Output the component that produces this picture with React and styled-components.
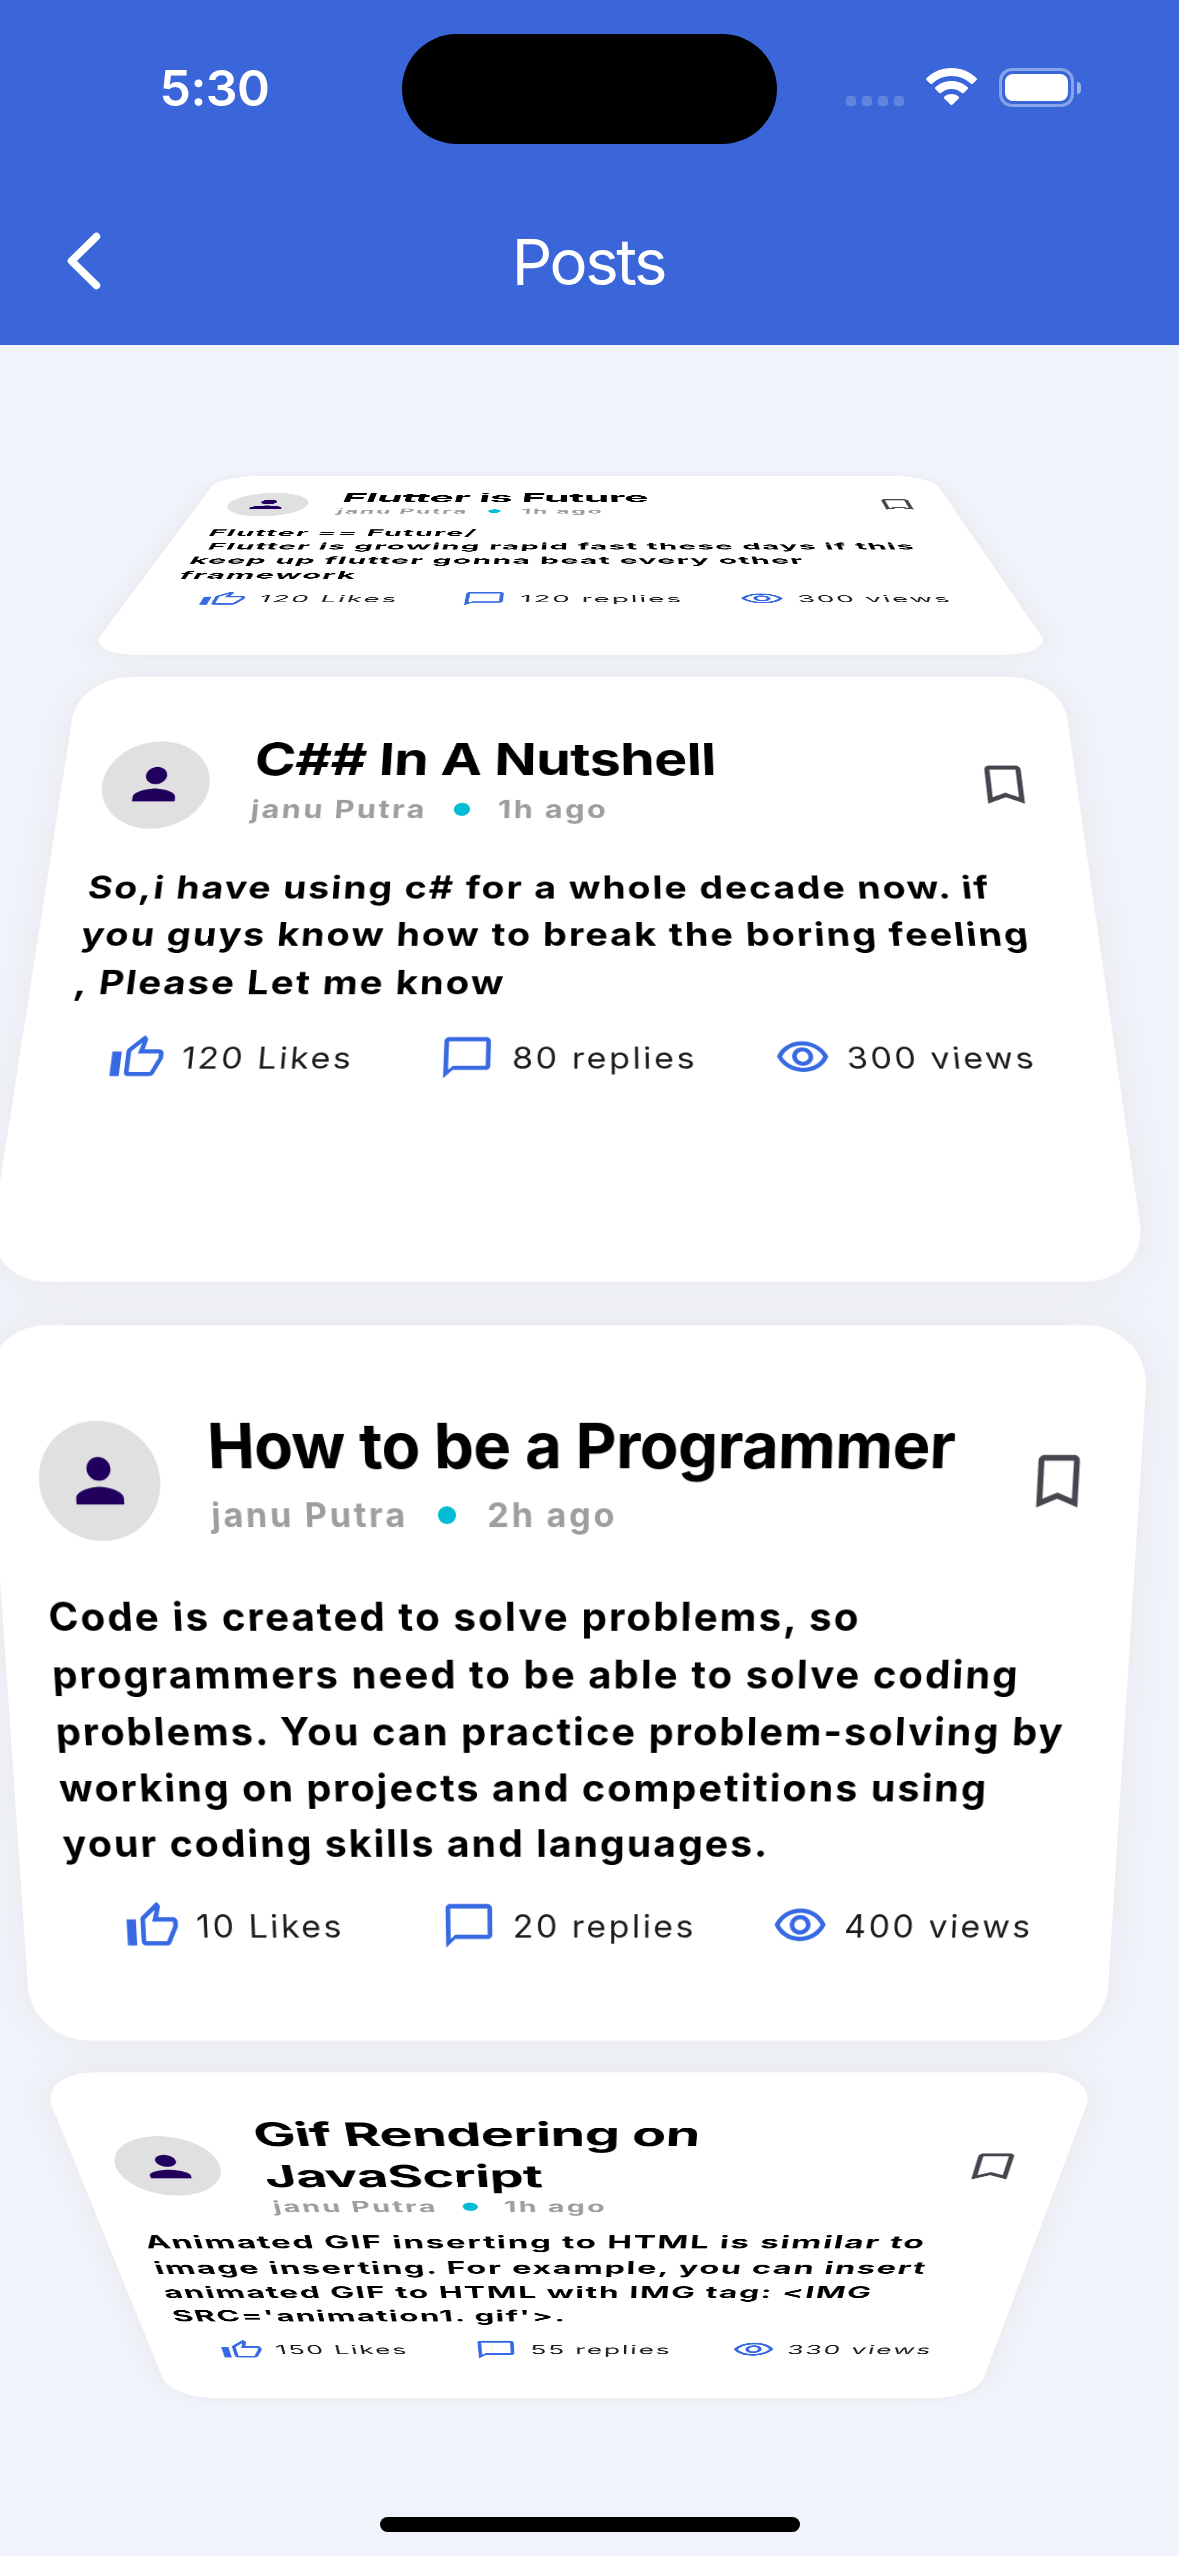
import React from "react";
import styled, { createGlobalStyle } from "styled-components";

const GlobalStyle = createGlobalStyle`
  * { box-sizing: border-box; }
  body { margin: 0; background: #f1f5fb; }
`;

const FONT = `Inter, "Liberation Sans", sans-serif`;

const Screen = styled.div`
  width: 1179px;
  height: 2556px;
  display: flex;
  flex-direction: column;
  overflow: hidden;
  background: #f1f5fb;
  font-family: ${FONT};
`;

const TopArea = styled.header`
  flex: none;
  height: 345px;
  display: flex;
  flex-direction: column;
  background: #3b66d9;
  color: #fff;
`;

const StatusBar = styled.div`
  height: 177px;
  display: grid;
  grid-template-columns: 402px 375px 402px;
  align-items: center;
`;

const Clock = styled.div`
  padding: 0 0 2px 27px;
  text-align: center;
  font-size: 50px;
  font-weight: 600;
  line-height: 60px;
  letter-spacing: -0.6px;
`;

const Island = styled.div`
  height: 110px;
  border-radius: 55px;
  background: #000;
`;

const Indicators = styled.div`
  display: flex;
  align-items: flex-end;
  justify-content: flex-end;
  padding-right: 98px;
  height: 41px;
  padding-bottom: 2px;
`;

const SignalDots = styled.div`
  display: flex;
  gap: 6px;
  margin: 0 22px 1px 0;
`;

const SignalDot = styled.i`
  width: 10px;
  height: 10px;
  border-radius: 3px;
  background: rgba(255, 255, 255, 0.2);
`;

const WifiGlyph = styled.svg`
  display: block;
  width: 51px;
  height: 38px;
  margin: 0 22px 1px 0;
`;

const Battery = styled.div`
  display: flex;
  align-items: center;
  gap: 3px;
`;

const BatteryShell = styled.div`
  width: 75px;
  height: 39px;
  padding: 3px;
  border: 3px solid rgba(255, 255, 255, 0.4);
  border-radius: 13px;
`;

const BatteryLevel = styled.div`
  height: 100%;
  border-radius: 8px;
  background: #fff;
`;

const BatteryCap = styled.div`
  width: 4px;
  height: 12px;
  border-radius: 0 6px 6px 0;
  background: rgba(255, 255, 255, 0.5);
`;

const NavBar = styled.nav`
  height: 168px;
  display: grid;
  grid-template-columns: 200px 1fr 200px;
  align-items: center;
`;

const BackButton = styled.button`
  display: flex;
  padding: 0 0 0 64px;
  border: 0;
  background: none;
`;

const PageTitle = styled.h1`
  margin: 2px 0 0;
  padding-right: 2px;
  text-align: center;
  font-size: 63.5px;
  font-weight: 400;
  line-height: 76px;
  letter-spacing: -2.4px;
`;

const Wheel = styled.main`
  flex: 1;
  display: grid;
  grid-template: 2211px / 1179px;
  align-items: center;
  perspective: 1000px;
  perspective-origin: 50% 50%;
`;

const Slot = styled.div`
  grid-area: 1 / 1;
  height: 750px;
  padding-right: 45px;
  transform: translateZ(-2211px) rotateX(${(p) => p.$angle}rad) translateZ(2211px);
`;

const Card = styled.article`
  height: 100%;
  padding: 72px 44px 0 45px;
  border-radius: 61px;
  background: #fff;
  box-shadow: 0 0 45px 5px rgba(165, 130, 130, 0.1);
`;

const CardHead = styled.div`
  display: flex;
  align-items: center;
  height: ${(p) => (p.$tall ? 210 : 161)}px;
  padding-right: 2px;
`;

const Avatar = styled.div`
  flex: none;
  display: flex;
  align-items: center;
  justify-content: center;
  width: 120px;
  height: 120px;
  padding-right: 1px;
  border-radius: 50%;
  background: #e0e0e0;
`;

const Heading = styled.div`
  flex: 1;
  align-self: flex-start;
  padding: ${(p) => (p.$tall ? 0 : 4)}px 0 0 48px;
`;

const Title = styled.h2`
  margin: 0;
  color: #000;
  font-size: 62.5px;
  font-weight: 700;
  line-height: 83px;
  letter-spacing: -0.6px;
  white-space: pre;
`;

const Byline = styled.div`
  display: flex;
  align-items: center;
  margin-top: ${(p) => (p.$tall ? -1 : 4)}px;
  padding-left: 1px;
  color: #9e9e9e;
  font-size: 34px;
  font-weight: 700;
  line-height: 48px;
  letter-spacing: 2.7px;
`;

const BylineDot = styled.i`
  width: 18px;
  height: 18px;
  margin: 0 31px 0 30px;
  border-radius: 50%;
  background: #00bcd4;
`;

const Body = styled.p`
  margin: 28px 0 31px;
  padding-left: 1px;
  color: #000;
  font-size: 40.5px;
  font-weight: 700;
  line-height: 60px;
  letter-spacing: 2.08px;
  white-space: pre;
`;

const Stats = styled.div`
  display: grid;
  grid-template-columns: repeat(3, 1fr);
`;

const Stat = styled.div`
  display: flex;
  align-items: center;
  justify-content: center;
  gap: 17px;
  height: 58px;
  color: #1d1b20;
  font-size: 35.2px;
  letter-spacing: 2.65px;
  white-space: nowrap;
`;

const Glyph = styled.svg`
  flex: none;
  display: block;
  width: ${(p) => p.$size}px;
  height: ${(p) => p.$size}px;
  fill: ${(p) => p.$color};
`;

const HomeArea = styled.footer`
  flex: none;
  display: flex;
  justify-content: center;
  height: 39px;
  margin-top: -39px;
`;

const HomeBar = styled.div`
  width: 420px;
  height: 15px;
  border-radius: 8px;
  background: #000;
`;

const PATHS = {
  person:
    "M12 12c2.21 0 4-1.79 4-4s-1.79-4-4-4-4 1.79-4 4 1.79 4 4 4zm0 2c-2.67 0-8 1.34-8 4v2h16v-2c0-2.66-5.33-4-8-4z",
  bookmark:
    "M17 3H7c-1.1 0-1.99.9-1.99 2L5 21l7-3 7 3V5c0-1.1-.9-2-2-2zm0 15l-5-2.18L7 18V5h10v13z",
  like:
    "M9 21h9c.83 0 1.54-.5 1.84-1.22l3.02-7.05c.09-.23.14-.47.14-.73v-2c0-1.1-.9-2-2-2h-6.31l.95-4.57.03-.32c0-.41-.17-.79-.44-1.06L14.17 1 7.58 7.59C7.22 7.95 7 8.45 7 9v10c0 1.1.9 2 2 2zM9 9l4.34-4.34L12 10h9v2l-3 7H9V9zM1 9h4v12H1z",
  reply:
    "M20 2H4c-1.1 0-2 .9-2 2v18l4-4h14c1.1 0 2-.9 2-2V4c0-1.1-.9-2-2-2zm0 14H6l-2 2V4h16v12z",
  view:
    "M12 6c3.79 0 7.17 2.13 8.82 5.5C19.17 14.87 15.79 17 12 17s-7.17-2.13-8.82-5.5C4.83 8.13 8.21 6 12 6m0-2C7 4 2.73 7.11 1 11.5 2.73 15.89 7 19 12 19s9.27-3.11 11-7.5C21.27 7.11 17 4 12 4zm0 5c1.38 0 2.5 1.12 2.5 2.5S13.38 14 12 14s-2.5-1.12-2.5-2.5S10.62 9 12 9m0-2c-2.48 0-4.5 2.02-4.5 4.5S9.52 16 12 16s4.5-2.02 4.5-4.5S14.48 7 12 7z",
};

function Icon({ name, size, color }) {
  return (
    <Glyph viewBox="0 0 24 24" $size={size} $color={color} aria-hidden="true">
      <path d={PATHS[name]} />
    </Glyph>
  );
}

const STEP = (750 / 2211) * (Math.PI / 3);
const FIRST_ANGLE = 0.5969;

const POSTS = [
  {
    title: "Flutter is Future",
    time: "1h ago",
    body: "Flutter == Future/\n Flutter is growing rapid fast these days if this\nkeep up flutter gonna beat every other\nframework",
    likes: 120,
    replies: 120,
    views: 300,
  },
  {
    title: "C## In A Nutshell",
    time: "1h ago",
    body: "So,i have using c# for a whole decade now. if\nyou guys know how to break the boring feeling\n, Please Let me know",
    likes: 120,
    replies: 80,
    views: 300,
  },
  {
    title: "How to be a Programmer",
    time: "2h ago",
    body: "Code is created to solve problems, so\nprogrammers need to be able to solve coding\nproblems. You can practice problem-solving by\nworking on projects and competitions using\nyour coding skills and languages.",
    likes: 10,
    replies: 20,
    views: 400,
  },
  {
    title: "Gif Rendering on\nJavaScript",
    time: "1h ago",
    body: "Animated GIF inserting to HTML is similar to\nimage inserting. For example, you can insert\nanimated GIF to HTML with IMG tag: <IMG\nSRC='animation1. gif'>.",
    likes: 150,
    replies: 55,
    views: 330,
    tall: true,
  },
];

function Post({ post, angle }) {
  const blue = "#3769e2";
  return (
    <Slot $angle={angle}>
      <Card>
        <CardHead $tall={post.tall}>
          <Avatar>
            <Icon name="person" size={71} color="#21005d" />
          </Avatar>
          <Heading $tall={post.tall}>
            <Title>{post.title}</Title>
            <Byline $tall={post.tall}>
              <span>janu Putra</span>
              <BylineDot />
              <span>{post.time}</span>
            </Byline>
          </Heading>
          <Icon name="bookmark" size={70} color="#49454f" />
        </CardHead>
        <Body>{post.body}</Body>
        <Stats>
          <Stat>
            <Icon name="like" size={58} color={blue} />
            <span>{post.likes} Likes</span>
          </Stat>
          <Stat>
            <Icon name="reply" size={58} color={blue} />
            <span>{post.replies} replies</span>
          </Stat>
          <Stat>
            <Icon name="view" size={58} color={blue} />
            <span>{post.views} views</span>
          </Stat>
        </Stats>
      </Card>
    </Slot>
  );
}

export default function App() {
  return (
    <Screen>
      <GlobalStyle />
      <TopArea>
        <StatusBar>
          <Clock>5:30</Clock>
          <Island />
          <Indicators>
            <SignalDots>
              <SignalDot />
              <SignalDot />
              <SignalDot />
              <SignalDot />
            </SignalDots>
            <WifiGlyph viewBox="0 0 51 38" fill="#fff">
              <path d="M25.5 0C35.4 0 44.4 3.9 50.6 10.2c.5.5.5 1.2 0 1.7l-3.9 3.9c-.5.5-1.2.5-1.7 0C40 10.9 33.1 7.9 25.5 7.9S11 10.9 6 15.8c-.5.5-1.2.5-1.7 0L.4 11.9c-.5-.5-.5-1.2 0-1.7C6.6 3.9 15.6 0 25.5 0z" />
              <path d="M25.5 13c6.3 0 12 2.4 16.2 6.3.5.5.5 1.2 0 1.7l-4 4c-.5.4-1.1.4-1.6 0-2.8-2.5-6.5-4.1-10.6-4.1s-7.8 1.6-10.6 4.1c-.5.4-1.1.4-1.6 0l-4-4c-.5-.5-.5-1.2 0-1.7C13.5 15.4 19.2 13 25.5 13z" />
              <path d="M25.5 26c2.8 0 5.3 1 7.2 2.7.5.5.5 1.2 0 1.7l-6.4 6.4c-.5.5-1.1.5-1.6 0l-6.4-6.4c-.5-.5-.5-1.2 0-1.7C20.2 27 22.7 26 25.5 26z" />
            </WifiGlyph>
            <Battery>
              <BatteryShell>
                <BatteryLevel />
              </BatteryShell>
              <BatteryCap />
            </Battery>
          </Indicators>
        </StatusBar>
        <NavBar>
          <BackButton aria-label="Back">
            <svg width="40" height="60" viewBox="0 0 40 60" fill="none" stroke="#fff" strokeWidth="7.5" strokeLinecap="round" strokeLinejoin="round">
              <path d="M32.5 5.5L7.5 30l25 24.5" />
            </svg>
          </BackButton>
          <PageTitle>Posts</PageTitle>
        </NavBar>
      </TopArea>
      <Wheel>
        {POSTS.map((post, i) => (
          <Post key={post.title} post={post} angle={FIRST_ANGLE - i * STEP} />
        ))}
      </Wheel>
      <HomeArea>
        <HomeBar />
      </HomeArea>
    </Screen>
  );
}
